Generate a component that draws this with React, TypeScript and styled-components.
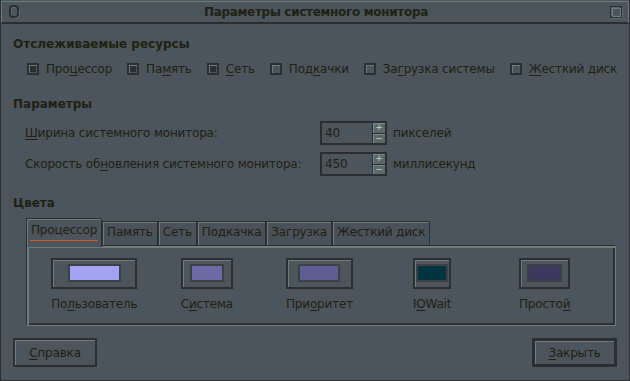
import styled, { createGlobalStyle } from 'styled-components'

const bg = '#4d555c'
const ink = '#1f2113'
const light = '#6d7d7b'
const dark = '#2b2f32'

const GlobalStyle = createGlobalStyle`
  html, body {
    margin: 0;
    padding: 0;
    background: ${bg};
  }
  body {
    font-family: 'DejaVu Sans', 'Noto Sans', sans-serif;
    font-size: 12px;
    letter-spacing: -0.18px;
    color: ${ink};
  }
`

const Window = styled.div`
  width: 630px;
  height: 381px;
  box-sizing: border-box;
  border: 1px solid ${dark};
  border-top: none;
  background: ${bg};
  display: flex;
  flex-direction: column;
`

const TitleBar = styled.div`
  height: 23px;
  margin-top: 1px;
  box-sizing: border-box;
  border: 1px solid ${light};
  border-bottom: 2px solid ${dark};
  display: grid;
  grid-template-columns: 1fr auto 1fr;
  align-items: center;
  padding: 0 5px 0 7px;
`

const TitleText = styled.div`
  font-weight: bold;
  font-size: 12px;
  letter-spacing: -0.3px;
`

const TitleIcon = styled.svg<{ $end?: boolean }>`
  justify-self: ${(p) => (p.$end ? 'end' : 'start')};
  display: block;
`

const Content = styled.div`
  flex: 1;
  display: flex;
  flex-direction: column;
  padding: 0 12px;
`

const SectionTitle = styled.div<{ $top: number }>`
  font-weight: bold;
  line-height: 14px;
  letter-spacing: 0;
  margin-top: ${(p) => p.$top}px;
`

const Mn = styled.span`
  text-decoration: underline;
  text-underline-offset: 2px;
`

const CheckRow = styled.div`
  display: flex;
  align-items: center;
  gap: 15px;
  margin-top: 11px;
  padding-left: 14px;
  line-height: 14px;
`

const CheckItem = styled.label`
  display: flex;
  align-items: center;
  gap: 7px;
  white-space: nowrap;
`

const Box = styled.span<{ $on: boolean }>`
  width: 12px;
  height: 12px;
  box-sizing: border-box;
  border: 2px solid ${dark};
  box-shadow: inset 1px 1px 0 ${light};
  display: flex;
  align-items: center;
  justify-content: center;
  &::after {
    content: '';
    width: 6px;
    height: 6px;
    background: ${(p) => (p.$on ? dark : 'transparent')};
  }
`

const ParamGrid = styled.div`
  display: grid;
  grid-template-columns: 289px 67px auto;
  column-gap: 6px;
  row-gap: 7px;
  align-items: center;
  margin-top: 10px;
  padding-left: 12px;
`

const Spin = styled.div`
  height: 24px;
  box-sizing: border-box;
  border: 2px solid ${dark};
  display: flex;
`

const SpinValue = styled.div`
  flex: 1;
  padding-left: 3px;
  line-height: 20px;
  border-right: 1px solid ${dark};
`

const SpinArrows = styled.div`
  width: 12px;
  display: flex;
  flex-direction: column;
`

const Arrow = styled.div`
  flex: 1;
  background: #5a6866;
  box-shadow: inset 1px 1px 0 #7a8a88;
  border-bottom: 1px solid ${dark};
  font-size: 9px;
  line-height: 9px;
  text-align: center;
  color: #c8d0cc;
  &:last-child {
    border-bottom: none;
  }
`

const TabStrip = styled.div`
  display: flex;
  align-items: flex-end;
  margin: 8px 0 0 13px;
  position: relative;
  z-index: 1;
`

const Tab = styled.div<{ $active?: boolean }>`
  box-sizing: border-box;
  height: ${(p) => (p.$active ? 29 : 24)}px;
  margin-bottom: ${(p) => (p.$active ? -2 : 0)}px;
  padding: ${(p) => (p.$active ? '4px 3px 0' : '3px 3px 0')};
  border: 1px solid ${dark};
  border-bottom: none;
  box-shadow: inset 1px 1px 0 ${light};
  background: ${(p) => (p.$active ? bg : '#4a5259')};
  line-height: 14px;
  white-space: nowrap;
`

const TabLabel = styled.span<{ $focus?: boolean }>`
  display: inline-block;
  padding: 0 1px 3px;
  border-bottom: 1px solid ${(p) => (p.$focus ? '#d4552b' : 'transparent')};
`

const Panel = styled.div`
  margin: 0 1px 0 13px;
  border: 1px solid;
  border-color: ${dark} ${light} ${light} ${dark};
  box-shadow: inset 2px 2px 0 ${light}, inset -2px -2px 0 ${dark};
  padding: 12px 14px 14px 11px;
  display: grid;
  grid-template-columns: repeat(5, 1fr);
`

const ColorCell = styled.div`
  display: flex;
  justify-content: center;
`

const ColorStack = styled.div`
  display: inline-flex;
  flex-direction: column;
  align-items: stretch;
  gap: 8px;
  line-height: 14px;
`

const ColorButton = styled.div`
  height: 31px;
  box-sizing: border-box;
  border: 2px solid ${dark};
  box-shadow: inset 1px 1px 0 ${light};
  display: flex;
  align-items: center;
  justify-content: center;
  padding-bottom: 1px;
`

const Swatch = styled.div<{ $color: string; $w: number }>`
  width: ${(p) => p.$w}px;
  height: 18px;
  box-sizing: border-box;
  border: 2px solid #3b4246;
  background: ${(p) => p.$color};
`

const ButtonRow = styled.div`
  display: flex;
  justify-content: space-between;
  margin-top: 12px;
`

const Button = styled.div<{ $default?: boolean }>`
  width: ${(p) => (p.$default ? 85 : 84)}px;
  height: 29px;
  box-sizing: border-box;
  border: ${(p) => (p.$default ? 3 : 2)}px solid ${dark};
  box-shadow: inset 1px 1px 0 ${light};
  display: flex;
  align-items: center;
  justify-content: center;
  line-height: 14px;
`

const resources = [
  { on: true, text: ['Про', 'ц', 'ессор'] },
  { on: true, text: ['Па', 'м', 'ять'] },
  { on: true, text: ['', 'С', 'еть'] },
  { on: false, text: ['Под', 'к', 'ачки'] },
  { on: false, text: ['За', 'г', 'рузка системы'] },
  { on: false, text: ['', 'Ж', 'есткий диск'] },
]

const tabs = ['Процессор', 'Память', 'Сеть', 'Подкачка', 'Загрузка', 'Жесткий диск']

const colors = [
  { color: '#a3a3f3', w: 53, text: ['По', 'л', 'ьзователь'] },
  { color: '#6c6ba3', w: 34, text: ['С', 'и', 'стема'] },
  { color: '#5f5e92', w: 42, text: ['При', 'о', 'ритет'] },
  { color: '#003440', w: 32, text: ['I', 'O', 'Wait'] },
  { color: '#3b3a5e', w: 35, text: ['Просто', 'й', ''] },
]

function Mnemonic({ text }: { text: string[] }) {
  return (
    <>
      {text[0]}
      <Mn>{text[1]}</Mn>
      {text[2]}
    </>
  )
}

export default function App() {
  return (
    <>
      <GlobalStyle />
      <Window>
        <TitleBar>
          <TitleIcon width="12" height="14" viewBox="0 0 12 14">
            <rect x="2" y="2" width="8" height="11" rx="3" fill="none" stroke={light} strokeWidth="1" />
            <rect x="1" y="1" width="8" height="11" rx="3" fill="none" stroke={dark} strokeWidth="2" />
          </TitleIcon>
          <TitleText>Параметры системного монитора</TitleText>
          <TitleIcon $end width="13" height="13" viewBox="0 0 13 13">
            <rect x="1" y="1" width="11" height="11" fill="none" stroke={light} strokeWidth="1" />
            <rect x="0" y="0" width="11" height="11" fill="none" stroke={dark} strokeWidth="2" />
            <rect x="2.5" y="2.5" width="8" height="8" fill="none" stroke={light} strokeWidth="1" />
          </TitleIcon>
        </TitleBar>

        <Content>
          <SectionTitle $top={13}>Отслеживаемые ресурсы</SectionTitle>
          <CheckRow>
            {resources.map((r, i) => (
              <CheckItem key={i}>
                <Box $on={r.on} />
                <span>
                  <Mnemonic text={r.text} />
                </span>
              </CheckItem>
            ))}
          </CheckRow>

          <SectionTitle $top={21}>Параметры</SectionTitle>
          <ParamGrid>
            <span>
              <Mn>Ш</Mn>ирина системного монитора:
            </span>
            <Spin>
              <SpinValue>40</SpinValue>
              <SpinArrows>
                <Arrow>+</Arrow>
                <Arrow>−</Arrow>
              </SpinArrows>
            </Spin>
            <span>пикселей</span>
            <span>
              Скорость об<Mn>н</Mn>овления системного монитора:
            </span>
            <Spin>
              <SpinValue>450</SpinValue>
              <SpinArrows>
                <Arrow>+</Arrow>
                <Arrow>−</Arrow>
              </SpinArrows>
            </Spin>
            <span>миллисекунд</span>
          </ParamGrid>

          <SectionTitle $top={20}>Цвета</SectionTitle>
          <TabStrip>
            {tabs.map((t, i) => (
              <Tab key={t} $active={i === 0}>
                <TabLabel $focus={i === 0}>{t}</TabLabel>
              </Tab>
            ))}
          </TabStrip>
          <Panel>
            {colors.map((c, i) => (
              <ColorCell key={i}>
                <ColorStack>
                  <ColorButton>
                    <Swatch $color={c.color} $w={c.w} />
                  </ColorButton>
                  <span>
                    <Mnemonic text={c.text} />
                  </span>
                </ColorStack>
              </ColorCell>
            ))}
          </Panel>

          <ButtonRow>
            <Button>
              <span>
                <Mn>С</Mn>правка
              </span>
            </Button>
            <Button $default>
              <span>
                <Mn>З</Mn>акрыть
              </span>
            </Button>
          </ButtonRow>
        </Content>
      </Window>
    </>
  )
}
